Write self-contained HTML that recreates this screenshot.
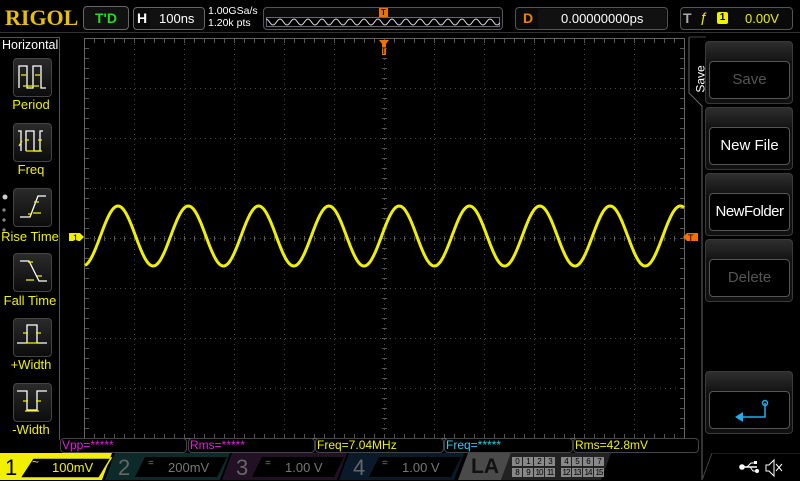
<!DOCTYPE html>
<html><head><meta charset="utf-8"><style>
*{margin:0;padding:0;box-sizing:border-box}
body{width:800px;height:480px;background:#000;overflow:hidden;position:relative;font-family:"Liberation Sans",sans-serif;color:#fff}
.a{position:absolute}
.box{position:absolute;border:1px solid #555;border-radius:4px;background:#0a0a0a}
.lbl{position:absolute;width:60px;text-align:center;color:#f0f000;font-size:13px}
.ib{position:absolute;left:13px;width:39px;height:39px;border:1px solid #444;border-radius:4px;background:linear-gradient(#2a2a2a,#0c0c0c)}
.rb{position:absolute;left:705px;width:88px;height:63px;border:1px solid #3a3a3a;border-radius:4px;background:linear-gradient(#2e2e2e,#111 35%)}
.rb div{position:absolute;left:3px;right:2px;top:19px;bottom:4px;border:1px solid #555;border-radius:4px;background:#000;text-align:center;line-height:36px;font-size:15px}
.meas{position:absolute;top:438px;height:15px;border:1px solid #444;border-radius:4px;font-size:12px;line-height:13px;padding-left:1px}
.la{position:absolute;background:#888;color:#000;width:10px;height:9px;text-align:center;font-size:8px;line-height:9px;letter-spacing:-1px;overflow:hidden}
</style></head><body>
<div class="a" style="left:5px;top:5px;font-family:'Liberation Serif',serif;font-weight:bold;font-size:22px;color:#e8c000">RIGOL</div>
<div class="box" style="left:83px;top:6px;width:46px;height:24px;background:#111;border-color:#666;color:#22dd22;font-weight:bold;font-size:14px;text-align:center;line-height:22px">T'D</div>
<div class="box" style="left:133px;top:7px;width:72px;height:23px;border-color:#666"></div>
<div class="a" style="left:137px;top:10px;font-weight:bold;font-size:14px">H</div>
<div class="a" style="left:150px;top:9px;width:54px;height:20px;border-radius:3px;background:#111"></div>
<div class="a" style="left:159px;top:11px;font-size:13px">100ns</div>
<div class="a" style="left:208px;top:5px;font-size:10.5px;line-height:12px">1.00GSa/s<br>1.20k pts</div>
<div class="box" style="left:263px;top:7px;width:240px;height:23px;border-color:#555"></div>
<div class="a" style="left:266px;top:17px;width:234px;height:10px;border:1px solid #667;background:#000"></div>
<svg class="a" style="left:266px;top:17px" width="234" height="10"><path id="mini" fill="none" stroke="#ddd" stroke-width="1"/></svg>
<div class="a" style="left:379px;top:8px;width:9px;height:9px;background:#f07000;color:#000;font-size:8px;text-align:center;line-height:9px;font-weight:bold">T</div>
<div class="box" style="left:515px;top:7px;width:153px;height:23px;border-color:#555"></div>
<div class="a" style="left:523px;top:10px;color:#f08000;font-weight:bold;font-size:14px">D</div>
<div class="a" style="left:538px;top:9px;width:128px;height:20px;background:#111;border-radius:3px"></div>
<div class="a" style="left:561px;top:11px;font-size:13px">0.00000000ps</div>
<div class="box" style="left:680px;top:7px;width:113px;height:23px;border-color:#555"></div>
<div class="a" style="left:683px;top:10px;color:#aaa;font-weight:bold;font-size:14px">T</div>
<div class="a" style="left:700px;top:9px;color:#f0f000;font-size:14px">ƒ</div>
<div class="a" style="left:717px;top:12px;width:11px;height:12px;background:#f0f000;border-radius:2px;color:#000;font-size:10px;text-align:center;line-height:12px;font-weight:bold">1</div>
<div class="a" style="left:745px;top:11px;color:#f0f000;font-size:13px">0.00V</div>
<div class="a" style="left:0;top:32px;width:800px;height:1px;background:#333"></div>

<div class="a" style="left:0;top:37px;width:60px;height:403px;border-right:1px solid #555;border-top:1px solid #555"></div>
<div class="a" style="left:2px;top:38px;font-size:12.5px">Horizontal</div>
<div class="ib" style="top:58px"></div><div class="lbl" style="left:1px;top:97px">Period</div>
<div class="ib" style="top:123px"></div><div class="lbl" style="left:1px;top:162px">Freq</div>
<div class="ib" style="top:188px"></div><div class="lbl" style="left:0px;top:229px">Rise Time</div>
<div class="ib" style="top:253px"></div><div class="lbl" style="left:0px;top:293px">Fall Time</div>
<div class="ib" style="top:318px"></div><div class="lbl" style="left:1px;top:357px">+Width</div>
<div class="ib" style="top:383px"></div><div class="lbl" style="left:1px;top:422px">-Width</div>
<svg class="a" style="left:0;top:0" width="60" height="440" fill="none" stroke-width="1.3">
<g stroke="#fff"><path d="M19 88V66h8v22h6V66h8v22h5"/><path d="M21 151V131h-3M26 151V131h8v20h6V131h3"/>
<path d="M20 217h10l8-21h8"/><path d="M20 261h9l10 20h8"/><path d="M17 343h10v-18h10v18h10"/><path d="M17 391h10v19h10v-19h10"/></g>
<g stroke="#f0f000"><path d="M21 75h5M35 75h5M23 86h16M25 140h4M38 140h4M26 151h16M34 202h5M28 214h4M33 213h8M28 262h5M37 276h5M26 280h8M23 333h5M36 333h5M25 343h14M23 401h5M36 401h5M25 411h14"/><path d="M19 146l3-5"/></g>
<g fill="#888" stroke="none"><circle cx="5" cy="197" r="2.5" fill="#ccc"/><circle cx="4" cy="210" r="1.6"/><circle cx="4" cy="220" r="1.6"/><circle cx="4" cy="230" r="1.6"/></g>
</svg>

<svg class="a" style="left:0;top:0" width="800" height="480">
<g id="grid"></g>
<rect x="84.5" y="38.5" width="600" height="400" fill="none" stroke="#666"/>
<path id="wave" fill="none" stroke="#f0f000" stroke-width="3"/>
<path d="M69 233h11l4 4-4 4H69z" fill="#f0f000"/><text x="73" y="241" font-size="9" font-family="Liberation Sans" fill="#000">1</text>
<path d="M698 233h-11l-4 4 4 4h11z" fill="#f07000"/><text x="688" y="241" font-size="9" font-family="Liberation Sans" fill="#000">T</text>
<path d="M379 40h10l-3 4v11h-4V44z" fill="#f07000"/><text x="381" y="54" font-size="9" font-family="Liberation Sans" fill="#000">T</text>
</svg>

<svg class="a" style="left:686px;top:36px" width="20" height="444"><path d="M3 1v56l13 13v374" fill="none" stroke="#666"/><path d="M3 1H20" stroke="#444"/></svg>
<div class="a" style="left:687px;top:72px;transform:rotate(-90deg);font-size:12px">Save</div>
<div class="rb" style="top:41px"><div style="color:#555">Save</div></div>
<div class="rb" style="top:107px"><div>New File</div></div>
<div class="rb" style="top:173px"><div style="letter-spacing:-0.5px">NewFolder</div></div>
<div class="rb" style="top:239px"><div style="color:#555">Delete</div></div>
<div class="rb" style="top:371px"><div></div></div>
<svg class="a" style="left:705px;top:371px" width="88" height="63"><path d="M60 32v14H37" fill="none" stroke="#1ab0f0" stroke-width="1.5"/><circle cx="60" cy="32" r="2.5" fill="none" stroke="#1ab0f0" stroke-width="1.5"/><path d="M30 46l8-5v10z" fill="#1ab0f0"/></svg>

<div class="meas" style="left:60px;width:127px;color:#e020e0">Vpp=*****</div>
<div class="meas" style="left:188px;width:127px;color:#e020e0">Rms=*****</div>
<div class="meas" style="left:315px;width:129px;color:#f0f000">Freq=7.04MHz</div>
<div class="meas" style="left:444px;width:129px;color:#20d0f0">Freq=*****</div>
<div class="meas" style="left:573px;width:126px;color:#f0f000">Rms=42.8mV</div>

<svg class="a" style="left:0;top:453px" width="800" height="27">
<path d="M0 0h112l-10 27H0z" fill="#f0f000"/>
<path d="M33 5h78l-12 20H20z" fill="#000" stroke="#f0f000" stroke-width="1.5"/>
<path d="M115 0h115l-10 27H105z" fill="#0c2a2a"/><path d="M145 4h82l-10 20H135z" fill="#000"/>
<path d="M232 0h115l-10 27H222z" fill="#221024"/><path d="M262 4h82l-10 20H252z" fill="#000"/>
<path d="M349 0h115l-10 27H339z" fill="#0a1a2a"/><path d="M379 4h82l-10 20H369z" fill="#000"/>
<path d="M468 0h43l-10 27H458z" fill="#4a4a4a"/>
<path d="M511 0h100l-10 27H501z" fill="#222"/>
<path d="M712 0l-10 27" stroke="#444"/><path d="M712 0h88" stroke="#333"/>
<g fill="#fff" stroke="#fff"><path d="M743 14h14" stroke-width="1.5"/><circle cx="742" cy="14" r="2.3"/><path d="M747 14l4-4h3M750 14l3 4h3" fill="none"/><rect x="754" y="8" width="3" height="3" stroke="none"/><circle cx="757" cy="18" r="1.5"/></g>
<path d="M766 12h3l5-5v16l-5-5h-3z" fill="none" stroke="#fff"/><path d="M776 11l6 7M782 11l-6 7" stroke="#fff"/>
</svg>
<div class="a" style="left:5px;top:455px;font-size:22px;color:#000">1</div>
<div class="a" style="left:32px;top:455px;font-size:12px;color:#f0f000">~</div>
<div class="a" style="left:52px;top:460px;font-size:13px;color:#f0f000">100mV</div>
<div class="a" style="left:118px;top:455px;font-size:22px;color:#666">2</div>
<div class="a" style="left:148px;top:458px;font-size:10px;color:#777">=</div>
<div class="a" style="left:168px;top:460px;font-size:13px;color:#777">200mV</div>
<div class="a" style="left:236px;top:455px;font-size:22px;color:#666">3</div>
<div class="a" style="left:265px;top:458px;font-size:10px;color:#777">=</div>
<div class="a" style="left:285px;top:460px;font-size:13px;color:#777">1.00 V</div>
<div class="a" style="left:353px;top:455px;font-size:22px;color:#666">4</div>
<div class="a" style="left:382px;top:458px;font-size:10px;color:#777">=</div>
<div class="a" style="left:402px;top:460px;font-size:13px;color:#777">1.00 V</div>
<div class="a" style="left:471px;top:455px;font-size:21px;font-weight:bold;color:#111">LA</div>
<div id="lad"></div>

<script>
var g='';
for(var i=1;i<12;i++){var x=84.5+i*50;g+='<line x1="'+x+'" y1="39" x2="'+x+'" y2="438" stroke="#4a4a4a" stroke-dasharray="1 4"/>';}
for(var j=1;j<8;j++){var y=38.5+j*50;g+='<line x1="85" y1="'+y+'" x2="684" y2="'+y+'" stroke="#4a4a4a" stroke-dasharray="1 4"/>';}
for(var x=84.5;x<=684;x+=10){g+='<line x1="'+x+'" y1="39" x2="'+x+'" y2="43" stroke="#555"/><line x1="'+x+'" y1="434" x2="'+x+'" y2="438" stroke="#555"/><line x1="'+x+'" y1="236" x2="'+x+'" y2="241" stroke="#555"/>';}
for(var y=38.5;y<=438;y+=10){g+='<line x1="85" y1="'+y+'" x2="89" y2="'+y+'" stroke="#555"/><line x1="680" y1="'+y+'" x2="684" y2="'+y+'" stroke="#555"/><line x1="382" y1="'+y+'" x2="387" y2="'+y+'" stroke="#555"/>';}
document.getElementById('grid').innerHTML=g;
var d='';for(var x=85;x<=684;x+=1){var y=236-30*Math.cos(2*Math.PI*(x-118)/70.3);d+=(x==85?'M':'L')+x+' '+y.toFixed(1);}
document.getElementById('wave').setAttribute('d',d);
var m='';for(var x=0;x<=234;x+=1){var y=5-3*Math.cos(2*Math.PI*x/14);m+=(x==0?'M':'L')+x+' '+y.toFixed(1);}
document.getElementById('mini').setAttribute('d',m);
var l='';for(var k=0;k<16;k++){var r=k>>3,c=k&7;var x=512+c*11+(c>3?5:0);l+='<div class="la" style="left:'+x+'px;top:'+(457+r*11)+'px">'+k+'</div>';}
document.getElementById('lad').innerHTML=l;
</script>
</body></html>
